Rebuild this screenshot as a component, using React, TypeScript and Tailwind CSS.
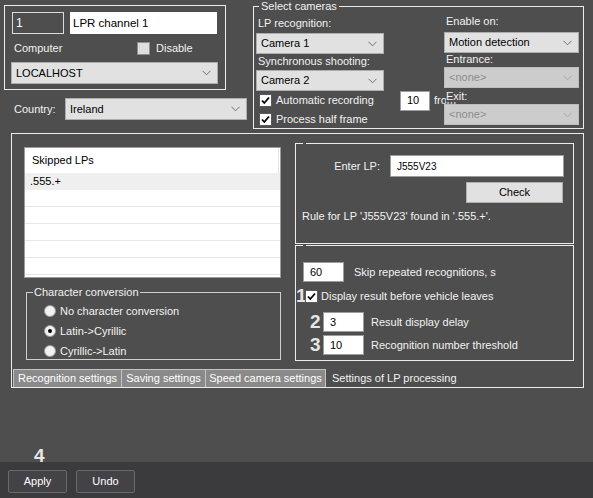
import React from "react";

function Chevron({ color = "#6e6e6e" }: { color?: string }) {
  return (
    <svg width="9" height="6" viewBox="0 0 9 6" fill="none">
      <polyline points="0.5,0.8 4.5,4.8 8.5,0.8" stroke={color} strokeWidth="1" />
    </svg>
  );
}

function Select({ value, className, disabled }: { value: string; className: string; disabled?: boolean }) {
  return (
    <div
      className={
        "flex items-center justify-between border pl-[4px] pr-[6px] " +
        (disabled
          ? "border-[#bdbdbd] bg-[#cccccc] text-[#8c8c8c] "
          : "border-[#adadad] bg-[#e1e1e1] text-black ") +
        className
      }
    >
      <span>{value}</span>
      <Chevron color={disabled ? "#a8a8a8" : "#6e6e6e"} />
    </div>
  );
}

function Check({ checked }: { checked?: boolean }) {
  if (!checked) {
    return <div className="h-[13px] w-[13px] shrink-0 border border-[#8e8e8e] bg-[#dedede]" />;
  }
  return (
    <div className="flex h-[13px] w-[13px] shrink-0 items-center justify-center border border-[#5a5a5a] bg-white">
      <svg width="9" height="9" viewBox="0 0 9 9">
        <polyline points="1,4.5 3.3,7 8,1.5" fill="none" stroke="#000" strokeWidth="1.8" />
      </svg>
    </div>
  );
}

function Radio({ selected }: { selected?: boolean }) {
  return (
    <div className="flex h-[12px] w-[12px] shrink-0 items-center justify-center rounded-full border border-[#9a9a9a] bg-[#f2f2f2]">
      {selected && <div className="h-[4px] w-[4px] rounded-full bg-black" />}
    </div>
  );
}

function TextBox({ value, className }: { value: string; className: string }) {
  return (
    <div className={"flex shrink-0 items-center border border-[#9c9c9c] bg-white pl-[6px] text-black " + className}>
      {value}
    </div>
  );
}

export default function App() {
  return (
    <div className="relative flex h-[498px] w-[593px] flex-col overflow-hidden bg-[#4e4e4e] font-['Liberation_Sans',Arial,sans-serif] text-[11px] leading-[13px] text-[#f2f2f2]">
      {/* top area */}
      <div className="flex h-[129px]">
        <div className="w-[253px] pl-[4px] pt-[5px]">
          <div className="h-[85px] w-[222px] border border-[#ececec] pl-[7px] pt-[6px]">
            <div className="flex gap-[6px]">
              <div className="flex h-[22px] w-[52px] items-center border border-[#dcdcdc] pl-[3px] text-[12px] text-white">1</div>
              <div className="flex h-[22px] w-[147px] items-center bg-white pl-[3px] text-[11.5px] text-black">LPR channel 1</div>
            </div>
            <div className="mt-[6px] flex h-[16px] items-center">
              <span className="ml-[2px] w-[123px]">Computer</span>
              <Check />
              <span className="ml-[6px]">Disable</span>
            </div>
            <Select value="LOCALHOST" className="ml-[-1px] mt-[6px] h-[22px] w-[207px]" />
          </div>
          <div className="mt-[8px] flex items-center">
            <span className="ml-[10px] w-[51px]">Country:</span>
            <Select value="Ireland" className="h-[22px] w-[182px]" />
          </div>
        </div>

        <fieldset className="h-[129px] w-[331px] border border-[#ececec] pl-[2px]">
          <legend className="ml-[3px] px-[2px]">Select cameras</legend>
          <div className="flex">
            <div className="w-[188px]">
              <div className="mt-[4px] pl-[2px]">LP recognition:</div>
              <Select value="Camera 1" className="mt-[3px] h-[21px] w-[128px]" />
              <div className="mt-[1px] pl-[2px]">Synchronous shooting:</div>
              <Select value="Camera 2" className="mt-[2px] h-[21px] w-[128px]" />
              <div className="flex h-[19px] items-center">
                <div className="ml-[3px]">
                  <Check checked />
                </div>
                <span className="ml-[4px] w-[124px] shrink-0">Automatic recording</span>
                <TextBox value="10" className="h-[20px] w-[30px]" />
                <span className="ml-[4px] shrink-0">from</span>
              </div>
              <div className="flex h-[18px] items-center">
                <div className="ml-[3px]">
                  <Check checked />
                </div>
                <span className="ml-[4px]">Process half frame</span>
              </div>
            </div>
            <div className="w-[135px]">
              <div className="mt-[2px] pl-[2px]">Enable on:</div>
              <Select value="Motion detection" className="mt-[4px] h-[21px] w-[135px]" />
              <div className="pl-[2px]">Entrance:</div>
              <Select value="<none>" disabled className="mt-[1px] h-[21px] w-[135px]" />
              <div className="relative mt-[2px] pl-[2px]">
                <span className="bg-[#4e4e4e] pr-[2px]">Exit:</span>
              </div>
              <Select value="<none>" disabled className="mt-[1px] h-[21px] w-[135px]" />
            </div>
          </div>
        </fieldset>
      </div>

      {/* main panel */}
      <div className="ml-[11px] mt-[4px] flex h-[255px] w-[573px] flex-col border border-[#ececec]">
        <div className="flex pl-[12px] pt-[9px]">
          <div className="w-[257px]">
            <div className="mt-[4px] h-[131px] border border-[#9c9c9c] bg-white text-black">
              <div className="flex h-[25px] w-[254px] items-center border-r border-[#e4e4e4] pl-[7px]">Skipped LPs</div>
              <div className="flex h-[17px] items-center bg-[#efefef] pl-[5px]">.555.+</div>
              {[0, 1, 2, 3, 4].map((i) => (
                <div key={i} className="h-[17px] border-b border-[#e6e6e6]" />
              ))}
            </div>
            <fieldset className="ml-[2px] mt-[8px] h-[74px] w-[255px] border border-[#cfcfcf]">
              <legend className="ml-[6px] px-[1px]">Character conversion</legend>
              <div className="mt-[2px] pl-[17px]">
                <div className="flex h-[20px] items-center gap-[4px]">
                  <Radio />
                  <span>No character conversion</span>
                </div>
                <div className="flex h-[20px] items-center gap-[4px]">
                  <Radio selected />
                  <span>Latin-&gt;Cyrillic</span>
                </div>
                <div className="flex h-[20px] items-center gap-[4px]">
                  <Radio />
                  <span>Cyrillic-&gt;Latin</span>
                </div>
              </div>
            </fieldset>
          </div>

          <div className="ml-[14px] w-[279px]">
            <fieldset className="h-[101px] border border-[#ececec] pt-[11px]">
              <legend className="ml-[7px] h-0 w-[3px]" />
              <div className="flex items-center">
                <span className="w-[84px] text-right">Enter LP:</span>
                <TextBox value="J555V23" className="ml-[10px] h-[22px] w-[174px] text-[10px]" />
              </div>
              <div className="ml-[170px] mt-[5px] flex h-[21px] w-[97px] items-center justify-center border border-[#b0b0b0] bg-[#e1e1e1] text-black">
                Check
              </div>
              <div className="mt-[7px] pl-[6px]">Rule for LP 'J555V23' found in '.555.+'.</div>
            </fieldset>
            <fieldset className="mt-[1px] h-[116px] border border-[#ececec] pt-[16px]">
              <legend className="ml-[7px] h-0 w-[3px]" />
              <div className="flex items-center">
                <TextBox value="60" className="ml-[7px] h-[20px] w-[41px]" />
                <span className="ml-[10px]">Skip repeated recognitions, s</span>
              </div>
              <div className="mt-[6px] flex h-[16px] items-center">
                <span className="w-[9px] text-[19px] font-bold leading-[16px] text-[#e6e6e6]">1</span>
                <Check checked />
                <span className="ml-[3px]">Display result before vehicle leaves</span>
              </div>
              <div className="mt-[8px] flex items-center">
                <span className="ml-[14px] w-[12px] text-[19px] font-bold leading-[16px] text-[#e6e6e6]">2</span>
                <TextBox value="3" className="ml-[1px] h-[20px] w-[41px]" />
                <span className="ml-[7px]">Result display delay</span>
              </div>
              <div className="mt-[3px] flex items-center">
                <span className="ml-[14px] w-[12px] text-[19px] font-bold leading-[16px] text-[#e6e6e6]">3</span>
                <TextBox value="10" className="ml-[1px] h-[20px] w-[41px]" />
                <span className="ml-[7px]">Recognition number threshold</span>
              </div>
            </fieldset>
          </div>
        </div>

        <div className="mt-auto flex h-[18px] pl-[1px]">
          <div className="flex w-[108px] items-center justify-center border-l border-t border-[#c4c4c4] bg-[#8a8a8a] text-white">Recognition settings</div>
          <div className="flex w-[84px] items-center justify-center border-l border-t border-[#c4c4c4] bg-[#8a8a8a] text-white">Saving settings</div>
          <div className="flex w-[121px] items-center justify-center border-l border-r border-t border-[#c4c4c4] bg-[#8a8a8a] text-white">Speed camera settings</div>
          <div className="flex items-center pl-[6px]">Settings of LP processing</div>
        </div>
      </div>

      {/* bottom bar */}
      <div className="mt-auto flex h-[36px] gap-[9px] bg-[#3b3a3c] pl-[8px] pt-[8px]">
        <div className="flex h-[23px] w-[59px] items-center justify-center rounded-[2px] border border-[#69686d] bg-[#434247] text-white">Apply</div>
        <div className="flex h-[23px] w-[59px] items-center justify-center rounded-[2px] border border-[#69686d] bg-[#434247] text-white">Undo</div>
      </div>
      <span className="absolute left-[34px] top-[449px] text-[19px] font-bold text-[#e6e6e6]">4</span>
    </div>
  );
}
